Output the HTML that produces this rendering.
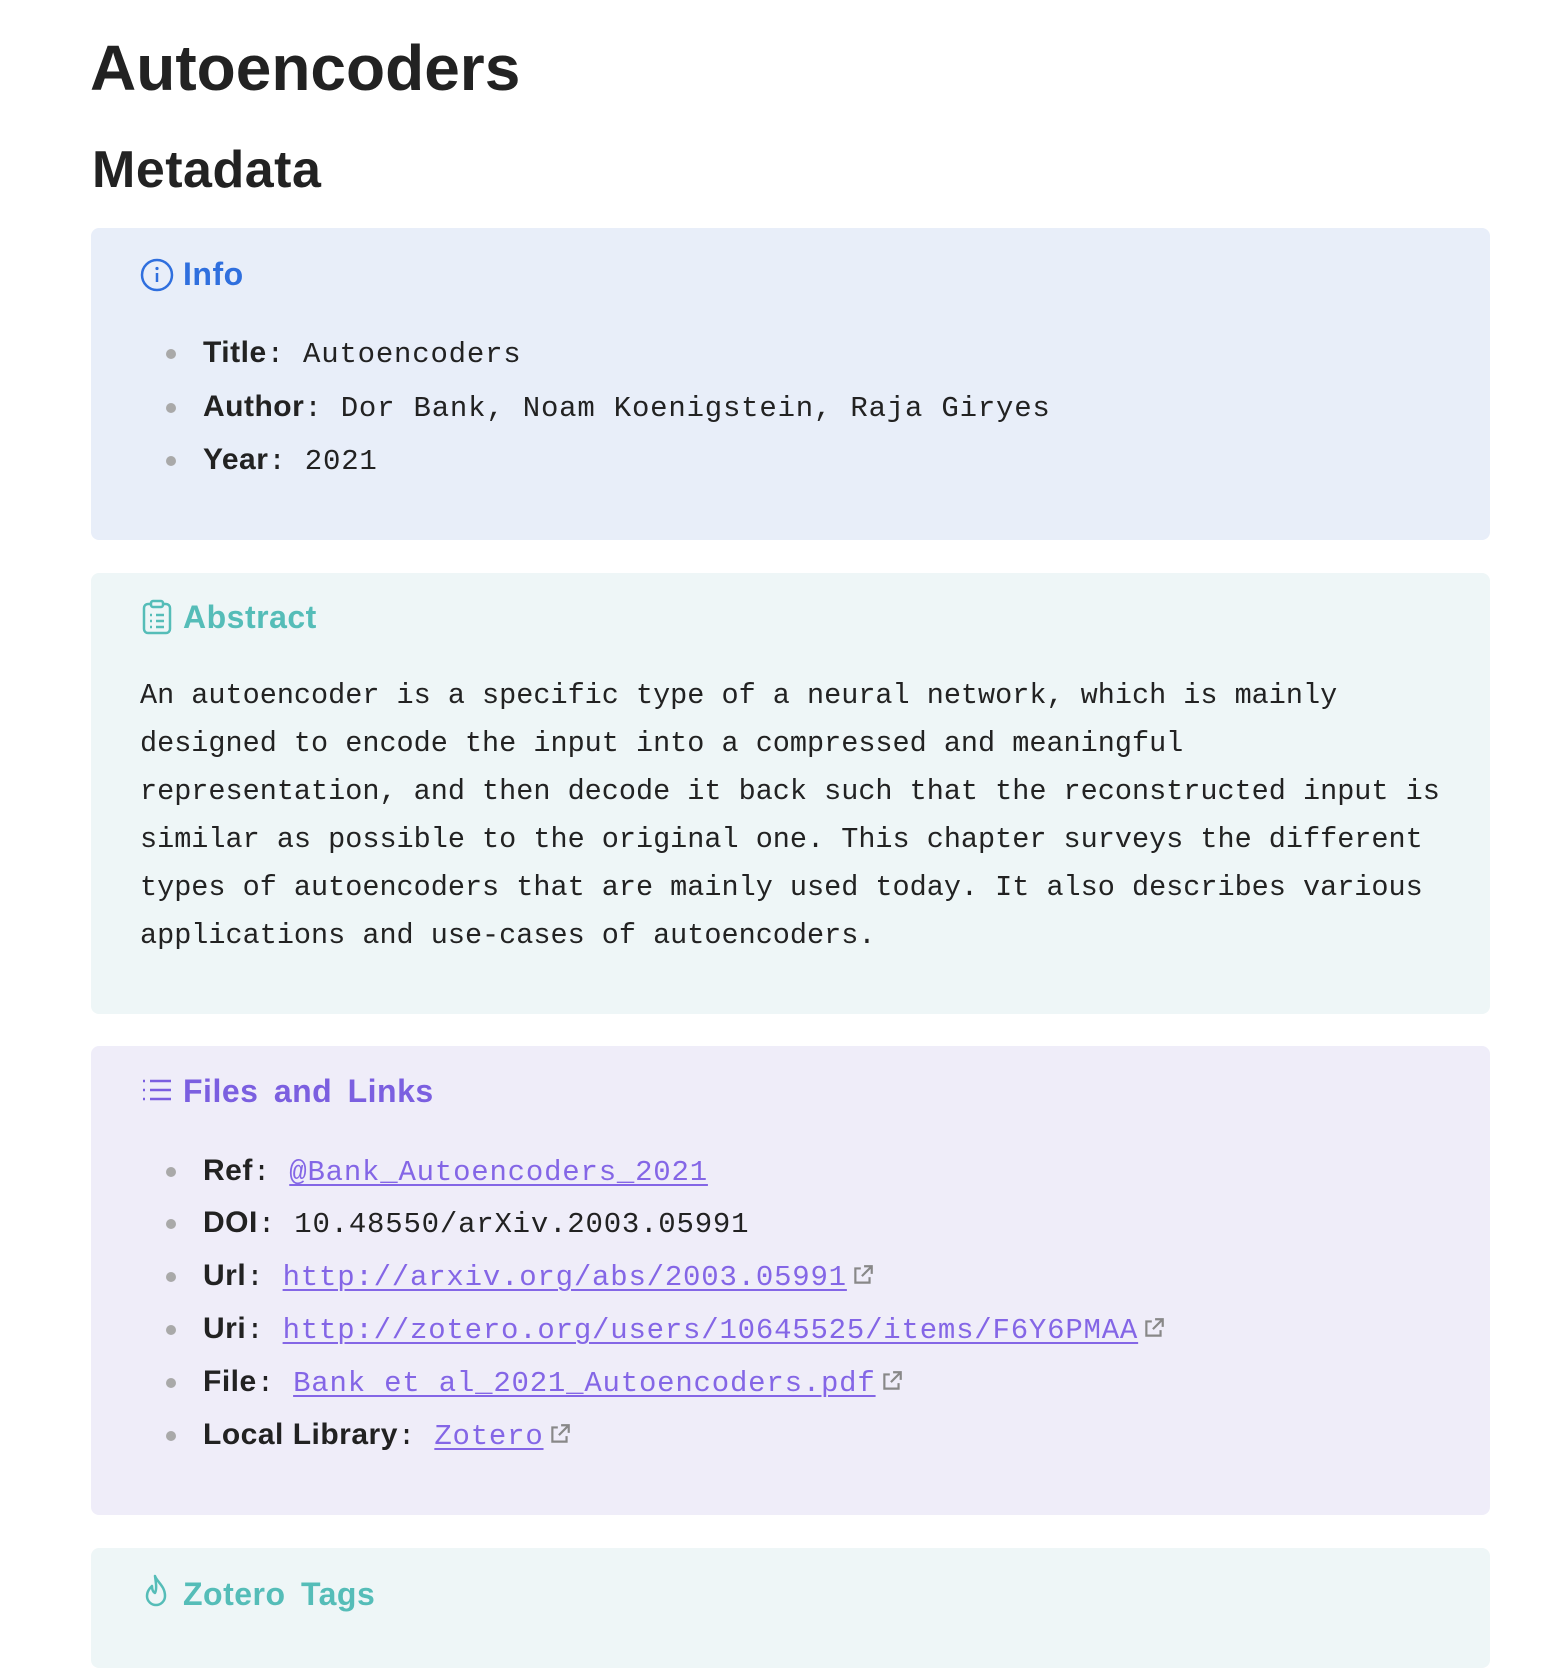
<!DOCTYPE html>
<html><head><meta charset="utf-8"><style>
*{margin:0;padding:0;box-sizing:border-box}
body{width:1566px;height:1636px;background:#fff;position:relative;overflow:hidden;font-family:"Liberation Sans",sans-serif;color:#222}
.a{position:absolute;white-space:nowrap}
h1{position:absolute;left:90px;top:28px;font-size:64px;font-weight:bold;line-height:80px;color:#222}
h2{position:absolute;left:92px;top:138px;font-size:52px;font-weight:bold;line-height:64px;letter-spacing:.5px;color:#222}
.box{position:absolute;left:91px;width:1399px;border-radius:8px}
.hd{position:absolute;left:183px;font-size:32px;font-weight:bold;line-height:40px;letter-spacing:.5px}
.row{position:absolute;left:171px;height:40px;line-height:40px;font-size:29px;white-space:nowrap;padding-left:32px;font-family:"Liberation Mono",monospace;letter-spacing:.8px}
.row:before{content:"";position:absolute;left:-5px;top:16px;width:10px;height:10px;border-radius:50%;background:#a9a9a9}
.row b{font-family:"Liberation Sans",sans-serif;font-size:30px;letter-spacing:.5px}
.lk{color:#8466e6;text-decoration:underline;text-decoration-thickness:2px;text-underline-offset:4px}
.ab{position:absolute;left:140px;top:672px;font-family:"Liberation Mono",monospace;font-size:28.5px;line-height:48px;color:#222;white-space:pre}
svg.ex{display:inline-block;width:24px;height:24px;vertical-align:-2px;margin-left:4px}
</style></head><body>
<h1>Autoencoders</h1>
<h2>Metadata</h2>

<div class="box" style="top:228px;height:312px;background:#e8eef9"></div>
<svg class="a" style="left:140px;top:258px" width="34" height="34" viewBox="0 0 34 34"><circle cx="17" cy="17" r="15" fill="none" stroke="#2f6fde" stroke-width="2.5"/><line x1="17" y1="15" x2="17" y2="24" stroke="#2f6fde" stroke-width="2.5"/><circle cx="17" cy="10.5" r="1.6" fill="#2f6fde"/></svg>
<div class="hd" style="top:254px;color:#2f6fde">Info</div>
<div class="row" style="top:333px"><b>Title</b>: Autoencoders</div>
<div class="row" style="top:387px"><b>Author</b>: Dor Bank, Noam Koenigstein, Raja Giryes</div>
<div class="row" style="top:440px"><b>Year</b>: 2021</div>

<div class="box" style="top:573px;height:441px;background:#eef6f7"></div>
<svg class="a" style="left:141px;top:599px" width="32" height="36" viewBox="0 0 32 36"><rect x="3" y="5" width="26" height="29" rx="4" fill="none" stroke="#55bdb8" stroke-width="2.5"/><rect x="10" y="2" width="12" height="6" rx="2" fill="#eef6f7" stroke="#55bdb8" stroke-width="2.5"/><g stroke="#55bdb8" stroke-width="2.5"><line x1="9" y1="16" x2="11" y2="16"/><line x1="15" y1="16" x2="23" y2="16"/><line x1="9" y1="22" x2="11" y2="22"/><line x1="15" y1="22" x2="23" y2="22"/><line x1="9" y1="28" x2="11" y2="28"/><line x1="15" y1="28" x2="23" y2="28"/></g></svg>
<div class="hd" style="top:597px;color:#55bdb8">Abstract</div>
<div class="ab">An autoencoder is a specific type of a neural network, which is mainly
designed to encode the input into a compressed and meaningful
representation, and then decode it back such that the reconstructed input is
similar as possible to the original one. This chapter surveys the different
types of autoencoders that are mainly used today. It also describes various
applications and use-cases of autoencoders.</div>

<div class="box" style="top:1046px;height:469px;background:#efedf9"></div>
<svg class="a" style="left:141px;top:1078px" width="32" height="26" viewBox="0 0 32 26"><g stroke="#7b5fe0" stroke-width="2.5"><line x1="2" y1="3" x2="4" y2="3"/><line x1="2" y1="12" x2="4" y2="12"/><line x1="2" y1="21" x2="4" y2="21"/><line x1="9" y1="3" x2="30" y2="3"/><line x1="9" y1="12" x2="30" y2="12"/><line x1="9" y1="21" x2="30" y2="21"/></g></svg>
<div class="hd" style="top:1071px;color:#7b5fe0;word-spacing:6px">Files and Links</div>
<div class="row" style="top:1151px"><b>Ref</b>: <span class="lk">@Bank_Autoencoders_2021</span></div>
<div class="row" style="top:1203px"><b>DOI</b>: 10.48550/arXiv.2003.05991</div>
<div class="row" style="top:1256px"><b>Url</b>: <span class="lk">http://arxiv.org/abs/2003.05991</span><svg class="ex" viewBox="0 0 22 22"><path d="M9 5H4v13h13v-5M12 3h7v7M19 3l-9 9" fill="none" stroke="#888" stroke-width="2"/></svg></div>
<div class="row" style="top:1309px"><b>Uri</b>: <span class="lk">http://zotero.org/users/10645525/items/F6Y6PMAA</span><svg class="ex" viewBox="0 0 22 22"><path d="M9 5H4v13h13v-5M12 3h7v7M19 3l-9 9" fill="none" stroke="#888" stroke-width="2"/></svg></div>
<div class="row" style="top:1362px"><b>File</b>: <span class="lk">Bank et al_2021_Autoencoders.pdf</span><svg class="ex" viewBox="0 0 22 22"><path d="M9 5H4v13h13v-5M12 3h7v7M19 3l-9 9" fill="none" stroke="#888" stroke-width="2"/></svg></div>
<div class="row" style="top:1415px"><b>Local Library</b>: <span class="lk">Zotero</span><svg class="ex" viewBox="0 0 22 22"><path d="M9 5H4v13h13v-5M12 3h7v7M19 3l-9 9" fill="none" stroke="#888" stroke-width="2"/></svg></div>

<div class="box" style="top:1548px;height:120px;background:#eef6f7"></div>
<svg class="a" style="left:143px;top:1574px" width="28" height="36" viewBox="0 0 28 36"><path d="M12 2c2 6 10 10 10 20a9 9 0 0 1-18 0c0-5 3-8 5-10 0 4 1 6 3 7 2-4 1-10 0-17z" fill="none" stroke="#55bdb8" stroke-width="2.5" stroke-linejoin="round"/></svg>
<div class="hd" style="top:1574px;color:#55bdb8;word-spacing:6px">Zotero Tags</div>
</body></html>
